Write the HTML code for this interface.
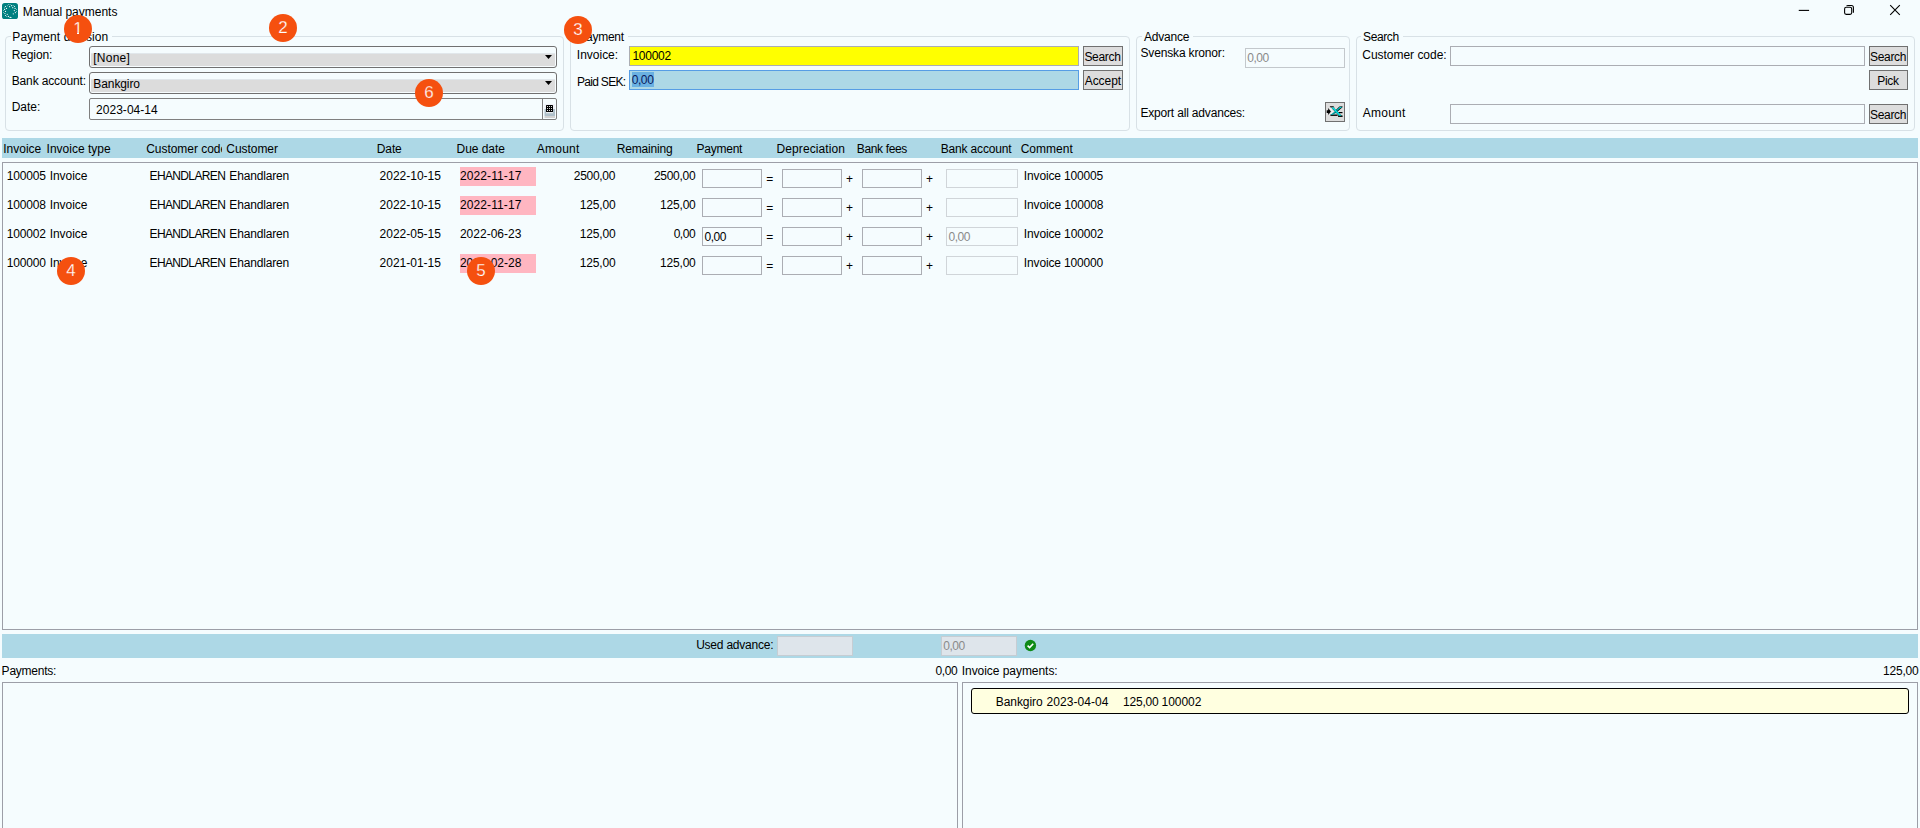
<!DOCTYPE html>
<html lang="en"><head><meta charset="utf-8"><title>Manual payments</title>
<style>
html,body{margin:0;padding:0}
body{width:1920px;height:828px;overflow:hidden;position:relative;background:#F5FCFE;color:#000;font:12px/14px "Liberation Sans",sans-serif}
.a{position:absolute}
.t{position:absolute;white-space:pre;line-height:14px;height:14px}
.gb{position:absolute;border:1px solid #D8E1E6;border-radius:4px;box-sizing:border-box}
.in{position:absolute;box-sizing:border-box;border:1px solid #ABADB3;background:#F5FCFE}
.dis{border-color:#D0D5D9}
.btn{position:absolute;box-sizing:border-box;border:1px solid #707070;background:#DDDDDD}
.cb{position:absolute;box-sizing:border-box;border:1px solid #707070;border-radius:3px;background:linear-gradient(#F5FCFE 0,#F5FCFE 6px,#E1E7EB 6px,#E1E7EB 7px,#DCDCDC 7px,#DCDCDC 100%);box-shadow:inset 0 0 0 1px #F7FCFE}
.bar{position:absolute;background:#ADD8E6}
.lb{position:absolute;box-sizing:border-box;border:1px solid #9C9EA7;background:#F5FCFE}
.pk{position:absolute;background:#FFB6C1}
.bd{position:absolute;width:28px;height:28px;border-radius:50%;background:#F5500F;color:#fff;font:300 17px/28px "Liberation Sans",sans-serif;text-align:center;-webkit-text-stroke:.25px #F5500F}
</style></head><body>

<svg class="a" style="left:0;top:0" width="22" height="22" viewBox="0 0 22 22">
<rect x="1.3" y="2.2" width="17.4" height="17.6" rx="3.2" fill="#fff" opacity=".75"/>
<rect x="2" y="3" width="16" height="16" rx="2.6" fill="#008080"/>
<g fill="#fff" opacity=".95"><circle cx="5.50" cy="6.50" r=".62"/><circle cx="9.60" cy="6.70" r=".62"/><circle cx="11.60" cy="5.65" r=".62"/><circle cx="14.50" cy="6.50" r=".62"/><circle cx="12.75" cy="7.70" r=".62"/><circle cx="6.50" cy="8.40" r=".62"/><circle cx="4.60" cy="9.40" r=".62"/><circle cx="15.10" cy="8.40" r=".62"/><circle cx="14.35" cy="10.60" r=".62"/><circle cx="5.50" cy="11.45" r=".62"/><circle cx="15.40" cy="12.60" r=".62"/><circle cx="13.30" cy="13.80" r=".62"/><circle cx="4.90" cy="13.50" r=".62"/><circle cx="7.25" cy="14.35" r=".62"/><circle cx="5.50" cy="15.50" r=".62"/><circle cx="8.40" cy="16.40" r=".62"/><circle cx="10.40" cy="17.40" r=".62"/></g><g fill="#fff" opacity=".6"><circle cx="8.70" cy="4.50" r=".5"/><circle cx="10.10" cy="4.50" r=".5"/><circle cx="7.40" cy="5.80" r=".5"/><circle cx="13.20" cy="5.50" r=".5"/><circle cx="4.30" cy="7.70" r=".5"/><circle cx="3.50" cy="10.60" r=".5"/><circle cx="3.50" cy="12.50" r=".5"/><circle cx="16.50" cy="9.60" r=".5"/><circle cx="16.50" cy="11.40" r=".5"/><circle cx="6.70" cy="16.50" r=".5"/><circle cx="11.60" cy="17.40" r=".5"/><circle cx="9.30" cy="17.30" r=".5"/></g>
</svg>
<svg class="a" style="left:1790px;top:0" width="130" height="24" viewBox="0 0 130 24" fill="none" stroke="#000" stroke-width="1.1">
<path d="M8.75 10.4H19.1"/>
<rect x="54.6" y="7.3" width="7.1" height="7.1" rx="1.6"/><path d="M56.5 5.9Q57 5.5 58 5.5H61.4Q63.4 5.5 63.4 7.5V12.7"/>
<path d="M100.2 5.2L109.8 14.8M109.8 5.2L100.2 14.8"/>
</svg>
<div class="gb" style="left:5px;top:36px;width:559px;height:95px"></div>
<div class="gb" style="left:570px;top:36px;width:560px;height:95px"></div>
<div class="gb" style="left:1136px;top:36px;width:214px;height:95px"></div>
<div class="gb" style="left:1356px;top:36px;width:559px;height:95px"></div>
<div class="cb" style="left:89px;top:46px;width:468px;height:22px"></div>
<svg class="a" style="left:545px;top:55px" width="8" height="5" viewBox="0 0 8 5"><path d="M0 0H7L3.5 4Z" fill="#000"/></svg>
<div class="cb" style="left:89px;top:72px;width:468px;height:22px"></div>
<svg class="a" style="left:545px;top:81px" width="8" height="5" viewBox="0 0 8 5"><path d="M0 0H7L3.5 4Z" fill="#000"/></svg>
<div class="a" style="left:89px;top:98px;width:468px;height:22px;box-sizing:border-box;border:1px solid #7F7F7F;border-radius:2px;background:#F5FCFE"></div>
<div class="a" style="left:542px;top:99px;width:1px;height:20px;background:#7F7F7F"></div>
<svg class="a" style="left:544px;top:103px" width="12" height="16" viewBox="0 0 12 16">
<rect x="0.5" y="1" width="10.5" height="5" fill="#EEF0F6"/>
<rect x="0.5" y="6" width="10.5" height="7" fill="#AFC0CA"/>
<rect x="0.5" y="13" width="10.5" height="2" fill="#D2D2D2"/>
<rect x="2" y="9.3" width="7" height=".9" fill="#fff"/>
<rect x="2" y="2" width="7" height="7" rx="0.6" fill="#000"/>
<g fill="#fff"><circle cx="3.5" cy="3.5" r=".55"/><circle cx="5.5" cy="3.5" r=".55"/><circle cx="7.5" cy="3.5" r=".55"/><circle cx="3.5" cy="5.5" r=".55"/><circle cx="5.5" cy="5.5" r=".55"/><circle cx="7.5" cy="5.5" r=".55"/><circle cx="3.5" cy="7.5" r=".55"/><circle cx="5.5" cy="7.5" r=".55"/><circle cx="7.5" cy="7.5" r=".55"/></g>
</svg>
<div class="in" style="left:629px;top:46px;width:450px;height:20px;background:#FFFF00"></div>
<div class="in" style="left:629px;top:70px;width:450px;height:20px;background:#ADD8E6;border-color:#569DE5"></div>
<div class="a" style="left:632px;top:72px;width:22px;height:15px;background:#6AB1E2"></div>
<div class="btn" style="left:1083px;top:46px;width:40px;height:20px"></div>
<div class="btn" style="left:1083px;top:70px;width:40px;height:20px"></div>
<div class="in dis" style="left:1245px;top:48px;width:100px;height:20px;border-color:#C3C8CC"></div>
<div class="btn" style="left:1325px;top:102px;width:20px;height:20px"></div>
<svg class="a" style="left:1326px;top:103px" width="18" height="18" viewBox="0 0 18 18">
<path d="M0.7 7.3H2.2V5L4.9 8.5 2.2 12V9.9H0.7Z" fill="#000"/>
<path d="M3.6 5L6.8 8.5 3.6 12" fill="none" stroke="#fff" stroke-width=".9"/>
<path d="M3.6 3.2H7.4L8.6 4.4H4.8Z" fill="#000"/>
<path d="M4.4 11.5H11.6V12.9H4.4Z" fill="#000"/>
<path d="M12 12.5H16.6V13.9H12Z" fill="#000"/>
<path d="M12.6 9H16.5V10.2H12.6Z" fill="#000"/>
<path d="M13.4 3.6L16.6 3.2 16.2 4.6 11 9 9.4 7.4Z" fill="#000"/>
<path d="M9.4 8L10.8 9.4 6.6 12H4.4Z" fill="#009A9A"/>
<path d="M13.6 4.1L16 3.8 10.8 8.3 10 7.3Z" fill="#00B8B8"/>
<path d="M14 4.2L16 3.9 15.2 4.7 13 5.2Z" fill="#00E8E8"/>
<path d="M5.8 5.2L8.2 5.2 16.4 13.4 13.6 13.4Z" fill="#000"/>
<path d="M5.4 4.4L7.6 4.4 15.6 12.8 13.2 12.8Z" fill="#00E5E5"/>
</svg>
<div class="in" style="left:1450px;top:46px;width:415px;height:20px"></div>
<div class="in" style="left:1450px;top:104px;width:415px;height:20px"></div>
<div class="btn" style="left:1869px;top:46px;width:39px;height:20px"></div>
<div class="btn" style="left:1869px;top:70px;width:39px;height:20px"></div>
<div class="btn" style="left:1869px;top:104px;width:39px;height:20px"></div>
<div class="bar" style="left:2px;top:138px;width:1916px;height:20px"></div>
<div class="lb" style="left:2px;top:162px;width:1916px;height:468px"></div>
<div class="pk" style="left:460px;top:167px;width:76px;height:19px"></div>
<div class="in" style="left:702px;top:169px;width:60px;height:19px"></div>
<div class="in" style="left:782px;top:169px;width:60px;height:19px"></div>
<div class="in" style="left:862px;top:169px;width:60px;height:19px"></div>
<div class="in dis" style="left:946px;top:169px;width:72px;height:19px"></div>
<div class="pk" style="left:460px;top:196px;width:76px;height:19px"></div>
<div class="in" style="left:702px;top:198px;width:60px;height:19px"></div>
<div class="in" style="left:782px;top:198px;width:60px;height:19px"></div>
<div class="in" style="left:862px;top:198px;width:60px;height:19px"></div>
<div class="in dis" style="left:946px;top:198px;width:72px;height:19px"></div>
<div class="in" style="left:702px;top:227px;width:60px;height:19px"></div>
<div class="in" style="left:782px;top:227px;width:60px;height:19px"></div>
<div class="in" style="left:862px;top:227px;width:60px;height:19px"></div>
<div class="in dis" style="left:946px;top:227px;width:72px;height:19px"></div>
<div class="pk" style="left:460px;top:254px;width:76px;height:19px"></div>
<div class="in" style="left:702px;top:256px;width:60px;height:19px"></div>
<div class="in" style="left:782px;top:256px;width:60px;height:19px"></div>
<div class="in" style="left:862px;top:256px;width:60px;height:19px"></div>
<div class="in dis" style="left:946px;top:256px;width:72px;height:19px"></div>
<div class="bar" style="left:2px;top:634px;width:1916px;height:24px"></div>
<div class="in" style="left:777px;top:636px;width:76px;height:20px;background:#DEE5EB;border-color:#C6CDD3"></div>
<div class="in" style="left:941px;top:636px;width:76px;height:20px;background:#DEE5EB;border-color:#C6CDD3"></div>
<svg class="a" style="left:1024px;top:639px" width="13" height="13" viewBox="0 0 13 13"><circle cx="6.4" cy="6.5" r="5.7" fill="#0E8A16"/><path d="M3.6 6.7L5.6 8.6 9.2 4.8" fill="none" stroke="#fff" stroke-width="1.6"/></svg>
<div class="lb" style="left:2px;top:682px;width:956px;height:160px"></div>
<div class="lb" style="left:962px;top:682px;width:956px;height:160px"></div>
<div class="a" style="left:971px;top:688px;width:938px;height:26px;box-sizing:border-box;border:1px solid #000;border-radius:3px;background:#FFFFE0"></div>
<span class="t" style="left:22.71px;top:5.0px;">Manual payments</span>
<div class="a" style="left:11px;top:34px;width:101px;height:5px;background:#F5FCFE"></div>
<span class="t" style="left:12.31px;top:30.0px;letter-spacing:0.085px;">Payment decision</span>
<div class="a" style="left:576px;top:34px;width:52px;height:5px;background:#F5FCFE"></div>
<span class="t" style="left:578.31px;top:30.0px;letter-spacing:-0.265px;">Payment</span>
<div class="a" style="left:1142px;top:34px;width:51px;height:5px;background:#F5FCFE"></div>
<span class="t" style="left:1143.88px;top:30.0px;letter-spacing:-0.188px;">Advance</span>
<div class="a" style="left:1361px;top:34px;width:42px;height:5px;background:#F5FCFE"></div>
<span class="t" style="left:1363.00px;top:30.0px;letter-spacing:-0.375px;">Search</span>
<span class="t" style="left:11.71px;top:48.0px;letter-spacing:-0.125px;">Region:</span>
<span class="t" style="left:11.71px;top:74.0px;letter-spacing:-0.139px;">Bank account:</span>
<span class="t" style="left:11.71px;top:100.0px;letter-spacing:-0.021px;">Date:</span>
<span class="t" style="left:93.19px;top:51.0px;letter-spacing:0.266px;">[None]</span>
<span class="t" style="left:93.31px;top:77.0px;letter-spacing:-0.090px;">Bankgiro</span>
<span class="t" style="left:96.05px;top:103.0px;letter-spacing:0.033px;">2023-04-14</span>
<span class="t" style="left:576.87px;top:48.0px;letter-spacing:-0.014px;">Invoice:</span>
<span class="t" style="left:576.91px;top:75.0px;letter-spacing:-0.685px;">Paid SEK:</span>
<span class="t" style="left:632.41px;top:49.0px;letter-spacing:-0.267px;">100002</span>
<span class="t" style="left:631.67px;top:73.0px;letter-spacing:-0.403px;color:#0A1A5C;">0,00</span>
<span class="t" style="left:1084.40px;top:50.0px;letter-spacing:-0.295px;">Search</span>
<span class="t" style="left:1084.68px;top:74.0px;letter-spacing:-0.031px;">Accept</span>
<span class="t" style="left:1140.50px;top:46.0px;letter-spacing:-0.155px;">Svenska kronor:</span>
<span class="t" style="left:1140.41px;top:106.0px;letter-spacing:-0.177px;">Export all advances:</span>
<span class="t" style="left:1247.37px;top:51.0px;letter-spacing:-0.503px;color:#8a8a8a;">0,00</span>
<span class="t" style="left:1362.34px;top:48.0px;letter-spacing:-0.032px;">Customer code:</span>
<span class="t" style="left:1362.68px;top:106.0px;letter-spacing:0.269px;">Amount</span>
<span class="t" style="left:1870.10px;top:50.0px;letter-spacing:-0.335px;">Search</span>
<span class="t" style="left:1877.31px;top:74.0px;letter-spacing:-0.336px;">Pick</span>
<span class="t" style="left:1870.10px;top:108.0px;letter-spacing:-0.335px;">Search</span>
<span class="t" style="left:3.27px;top:142.0px;letter-spacing:-0.018px;">Invoice</span>
<span class="t" style="left:46.57px;top:142.0px;">Invoice type</span>
<span class="t" style="left:146.24px;top:142.0px;letter-spacing:-0.042px;width:75.76px;overflow:hidden;">Customer code</span>
<span class="t" style="left:226.34px;top:142.0px;letter-spacing:-0.057px;">Customer</span>
<span class="t" style="left:376.81px;top:142.0px;letter-spacing:-0.124px;">Date</span>
<span class="t" style="left:456.61px;top:142.0px;letter-spacing:-0.066px;">Due date</span>
<span class="t" style="left:536.78px;top:142.0px;letter-spacing:0.229px;">Amount</span>
<span class="t" style="left:616.81px;top:142.0px;letter-spacing:-0.173px;">Remaining</span>
<span class="t" style="left:696.61px;top:142.0px;letter-spacing:-0.265px;">Payment</span>
<span class="t" style="left:776.61px;top:142.0px;letter-spacing:0.083px;">Depreciation</span>
<span class="t" style="left:856.81px;top:142.0px;letter-spacing:-0.356px;">Bank fees</span>
<span class="t" style="left:940.81px;top:142.0px;letter-spacing:-0.182px;">Bank account</span>
<span class="t" style="left:1020.64px;top:142.0px;letter-spacing:0.037px;">Comment</span>
<span class="t" style="left:6.81px;top:169.0px;letter-spacing:-0.171px;">100005</span>
<span class="t" style="left:49.67px;top:169.0px;letter-spacing:-0.035px;">Invoice</span>
<span class="t" style="left:149.51px;top:169.0px;letter-spacing:-0.628px;">EHANDLAREN</span>
<span class="t" style="left:229.31px;top:169.0px;letter-spacing:-0.165px;">Ehandlaren</span>
<span class="t" style="left:379.55px;top:169.0px;letter-spacing:-0.006px;">2022-10-15</span>
<span class="t" style="left:459.95px;top:169.0px;letter-spacing:0.112px;">2022-11-17</span>
<span class="t" style="left:573.75px;top:169.0px;letter-spacing:-0.282px;">2500,00</span>
<span class="t" style="left:653.95px;top:169.0px;letter-spacing:-0.282px;">2500,00</span>
<span class="t" style="left:766.24px;top:172.0px;">=</span>
<span class="t" style="left:846.04px;top:172.0px;">+</span>
<span class="t" style="left:926.04px;top:172.0px;">+</span>
<span class="t" style="left:1023.87px;top:169.0px;letter-spacing:-0.159px;">Invoice 100005</span>
<span class="t" style="left:6.81px;top:198.0px;letter-spacing:-0.171px;">100008</span>
<span class="t" style="left:49.67px;top:198.0px;letter-spacing:-0.035px;">Invoice</span>
<span class="t" style="left:149.51px;top:198.0px;letter-spacing:-0.628px;">EHANDLAREN</span>
<span class="t" style="left:229.31px;top:198.0px;letter-spacing:-0.165px;">Ehandlaren</span>
<span class="t" style="left:379.55px;top:198.0px;letter-spacing:-0.006px;">2022-10-15</span>
<span class="t" style="left:459.95px;top:198.0px;letter-spacing:0.112px;">2022-11-17</span>
<span class="t" style="left:579.81px;top:198.0px;letter-spacing:-0.181px;">125,00</span>
<span class="t" style="left:660.01px;top:198.0px;letter-spacing:-0.181px;">125,00</span>
<span class="t" style="left:766.24px;top:201.0px;">=</span>
<span class="t" style="left:846.04px;top:201.0px;">+</span>
<span class="t" style="left:926.04px;top:201.0px;">+</span>
<span class="t" style="left:1023.87px;top:198.0px;letter-spacing:-0.133px;">Invoice 100008</span>
<span class="t" style="left:6.81px;top:227.0px;letter-spacing:-0.167px;">100002</span>
<span class="t" style="left:49.67px;top:227.0px;letter-spacing:-0.035px;">Invoice</span>
<span class="t" style="left:149.51px;top:227.0px;letter-spacing:-0.628px;">EHANDLAREN</span>
<span class="t" style="left:229.31px;top:227.0px;letter-spacing:-0.165px;">Ehandlaren</span>
<span class="t" style="left:379.55px;top:227.0px;letter-spacing:-0.006px;">2022-05-15</span>
<span class="t" style="left:459.95px;top:227.0px;letter-spacing:0.010px;">2022-06-23</span>
<span class="t" style="left:579.81px;top:227.0px;letter-spacing:-0.181px;">125,00</span>
<span class="t" style="left:673.67px;top:227.0px;letter-spacing:-0.469px;">0,00</span>
<span class="t" style="left:766.24px;top:230.0px;">=</span>
<span class="t" style="left:846.04px;top:230.0px;">+</span>
<span class="t" style="left:926.04px;top:230.0px;">+</span>
<span class="t" style="left:1023.87px;top:227.0px;letter-spacing:-0.139px;">Invoice 100002</span>
<span class="t" style="left:6.81px;top:256.0px;letter-spacing:-0.180px;">100000</span>
<span class="t" style="left:49.67px;top:256.0px;letter-spacing:-0.035px;">Invoice</span>
<span class="t" style="left:149.51px;top:256.0px;letter-spacing:-0.628px;">EHANDLAREN</span>
<span class="t" style="left:229.31px;top:256.0px;letter-spacing:-0.165px;">Ehandlaren</span>
<span class="t" style="left:379.55px;top:256.0px;letter-spacing:-0.006px;">2021-01-15</span>
<span class="t" style="left:459.95px;top:256.0px;letter-spacing:0.009px;">2021-02-28</span>
<span class="t" style="left:579.81px;top:256.0px;letter-spacing:-0.181px;">125,00</span>
<span class="t" style="left:660.01px;top:256.0px;letter-spacing:-0.181px;">125,00</span>
<span class="t" style="left:766.24px;top:259.0px;">=</span>
<span class="t" style="left:846.04px;top:259.0px;">+</span>
<span class="t" style="left:926.04px;top:259.0px;">+</span>
<span class="t" style="left:1023.87px;top:256.0px;letter-spacing:-0.162px;">Invoice 100000</span>
<span class="t" style="left:704.47px;top:230.0px;letter-spacing:-0.469px;">0,00</span>
<span class="t" style="left:948.47px;top:230.0px;letter-spacing:-0.469px;color:#8a8a8a;">0,00</span>
<span class="t" style="left:696.15px;top:638.0px;letter-spacing:-0.217px;">Used advance:</span>
<span class="t" style="left:943.37px;top:639.0px;letter-spacing:-0.503px;color:#8a8a8a;">0,00</span>
<span class="t" style="left:1.61px;top:664.0px;letter-spacing:-0.235px;">Payments:</span>
<span class="t" style="left:935.57px;top:664.0px;letter-spacing:-0.436px;">0,00</span>
<span class="t" style="left:961.77px;top:664.0px;letter-spacing:-0.050px;">Invoice payments:</span>
<span class="t" style="left:1882.91px;top:664.0px;letter-spacing:-0.181px;">125,00</span>
<span class="t" style="left:995.71px;top:695.0px;letter-spacing:-0.047px;">Bankgiro</span>
<span class="t" style="left:1046.45px;top:695.0px;letter-spacing:0.066px;">2023-04-04</span>
<span class="t" style="left:1122.91px;top:695.0px;letter-spacing:-0.181px;">125,00</span>
<span class="t" style="left:1161.61px;top:695.0px;letter-spacing:-0.067px;">100002</span>
<div class="bd" style="left:64px;top:15px">1<i class="a" style="left:8px;top:17px;width:5px;height:2px;background:#F5500F"></i><i class="a" style="left:15px;top:17px;width:4px;height:2px;background:#F5500F"></i></div>
<div class="bd" style="left:269px;top:14px">2</div>
<div class="bd" style="left:564px;top:16px">3</div>
<div class="bd" style="left:57px;top:257px">4</div>
<div class="bd" style="left:467px;top:257px">5</div>
<div class="bd" style="left:415px;top:79px">6</div>
</body></html>
